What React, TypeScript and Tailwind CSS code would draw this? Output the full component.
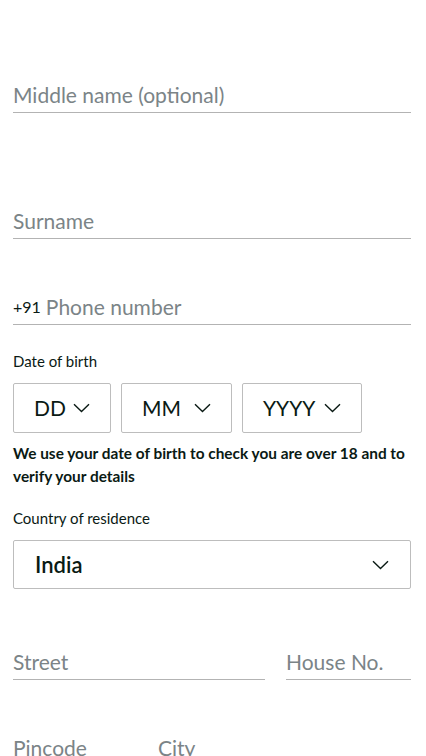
import React from "react";

const Chevron = ({ className = "" }: { className?: string }) => (
  <svg width="17" height="10" viewBox="0 0 17 10" fill="none" className={className}>
    <path d="M1 1.2 L8.5 8.6 L16 1.2" stroke="#0a1a14" strokeWidth="1.4" />
  </svg>
);

const LineField = ({ children, className = "" }: { children: React.ReactNode; className?: string }) => (
  <div className={`h-[41px] border-b border-[#b3b3b3] flex items-end pb-[4px] ${className}`}>{children}</div>
);

const Placeholder = ({ text }: { text: string }) => (
  <span className="text-[21px] leading-[26px] text-[#7b8487]">{text}</span>
);

const DateBox = ({ label, width }: { label: string; width: string }) => (
  <div className={`h-[50px] border border-[#bdbdbd] rounded-[2px] flex items-center justify-between px-[20px] ${width}`}>
    <span className="text-[21px] leading-[26px] text-[#0a1a14]">{label}</span>
    <Chevron />
  </div>
);

export default function App() {
  return (
    <div className="min-h-screen bg-white pl-[13px] pr-[15px] pt-[72px] font-['Lato',sans-serif] text-[#0a1a14] overflow-hidden">
      <LineField>
        <Placeholder text="Middle name (optional)" />
      </LineField>

      <LineField className="mt-[85px]">
        <Placeholder text="Surname" />
      </LineField>

      <LineField className="mt-[45px] gap-[5px]">
        <span className="text-[16px] leading-[26px] text-[#0a1a14]">+91</span>
        <Placeholder text="Phone number" />
      </LineField>

      <div className="mt-[26px] text-[15px] leading-[20px]">Date of birth</div>
      <div className="mt-[12px] flex gap-[10px]">
        <DateBox label="DD" width="w-[98px]" />
        <DateBox label="MM" width="w-[111px]" />
        <DateBox label="YYYY" width="w-[120px]" />
      </div>

      <p className="mt-[9px] text-[15.4px] leading-[23px] font-bold">
        We use your date of birth to check you are over 18 and to verify your details
      </p>

      <div className="mt-[20px] text-[15px] leading-[20px]">Country of residence</div>
      <div className="mt-[12px] h-[49px] border border-[#bdbdbd] rounded-[2px] flex items-center justify-between pl-[21px] pr-[21px]">
        <span className="text-[22px] leading-[28px] font-semibold">India</span>
        <Chevron />
      </div>

      <div className="mt-[50px] flex gap-[21px]">
        <LineField className="flex-1">
          <Placeholder text="Street" />
        </LineField>
        <LineField className="w-[125px]">
          <Placeholder text="House No." />
        </LineField>
      </div>

      <div className="mt-[45px] flex gap-[21px]">
        <LineField className="w-[124px]">
          <Placeholder text="Pincode" />
        </LineField>
        <LineField className="flex-1">
          <Placeholder text="City" />
        </LineField>
      </div>
    </div>
  );
}
